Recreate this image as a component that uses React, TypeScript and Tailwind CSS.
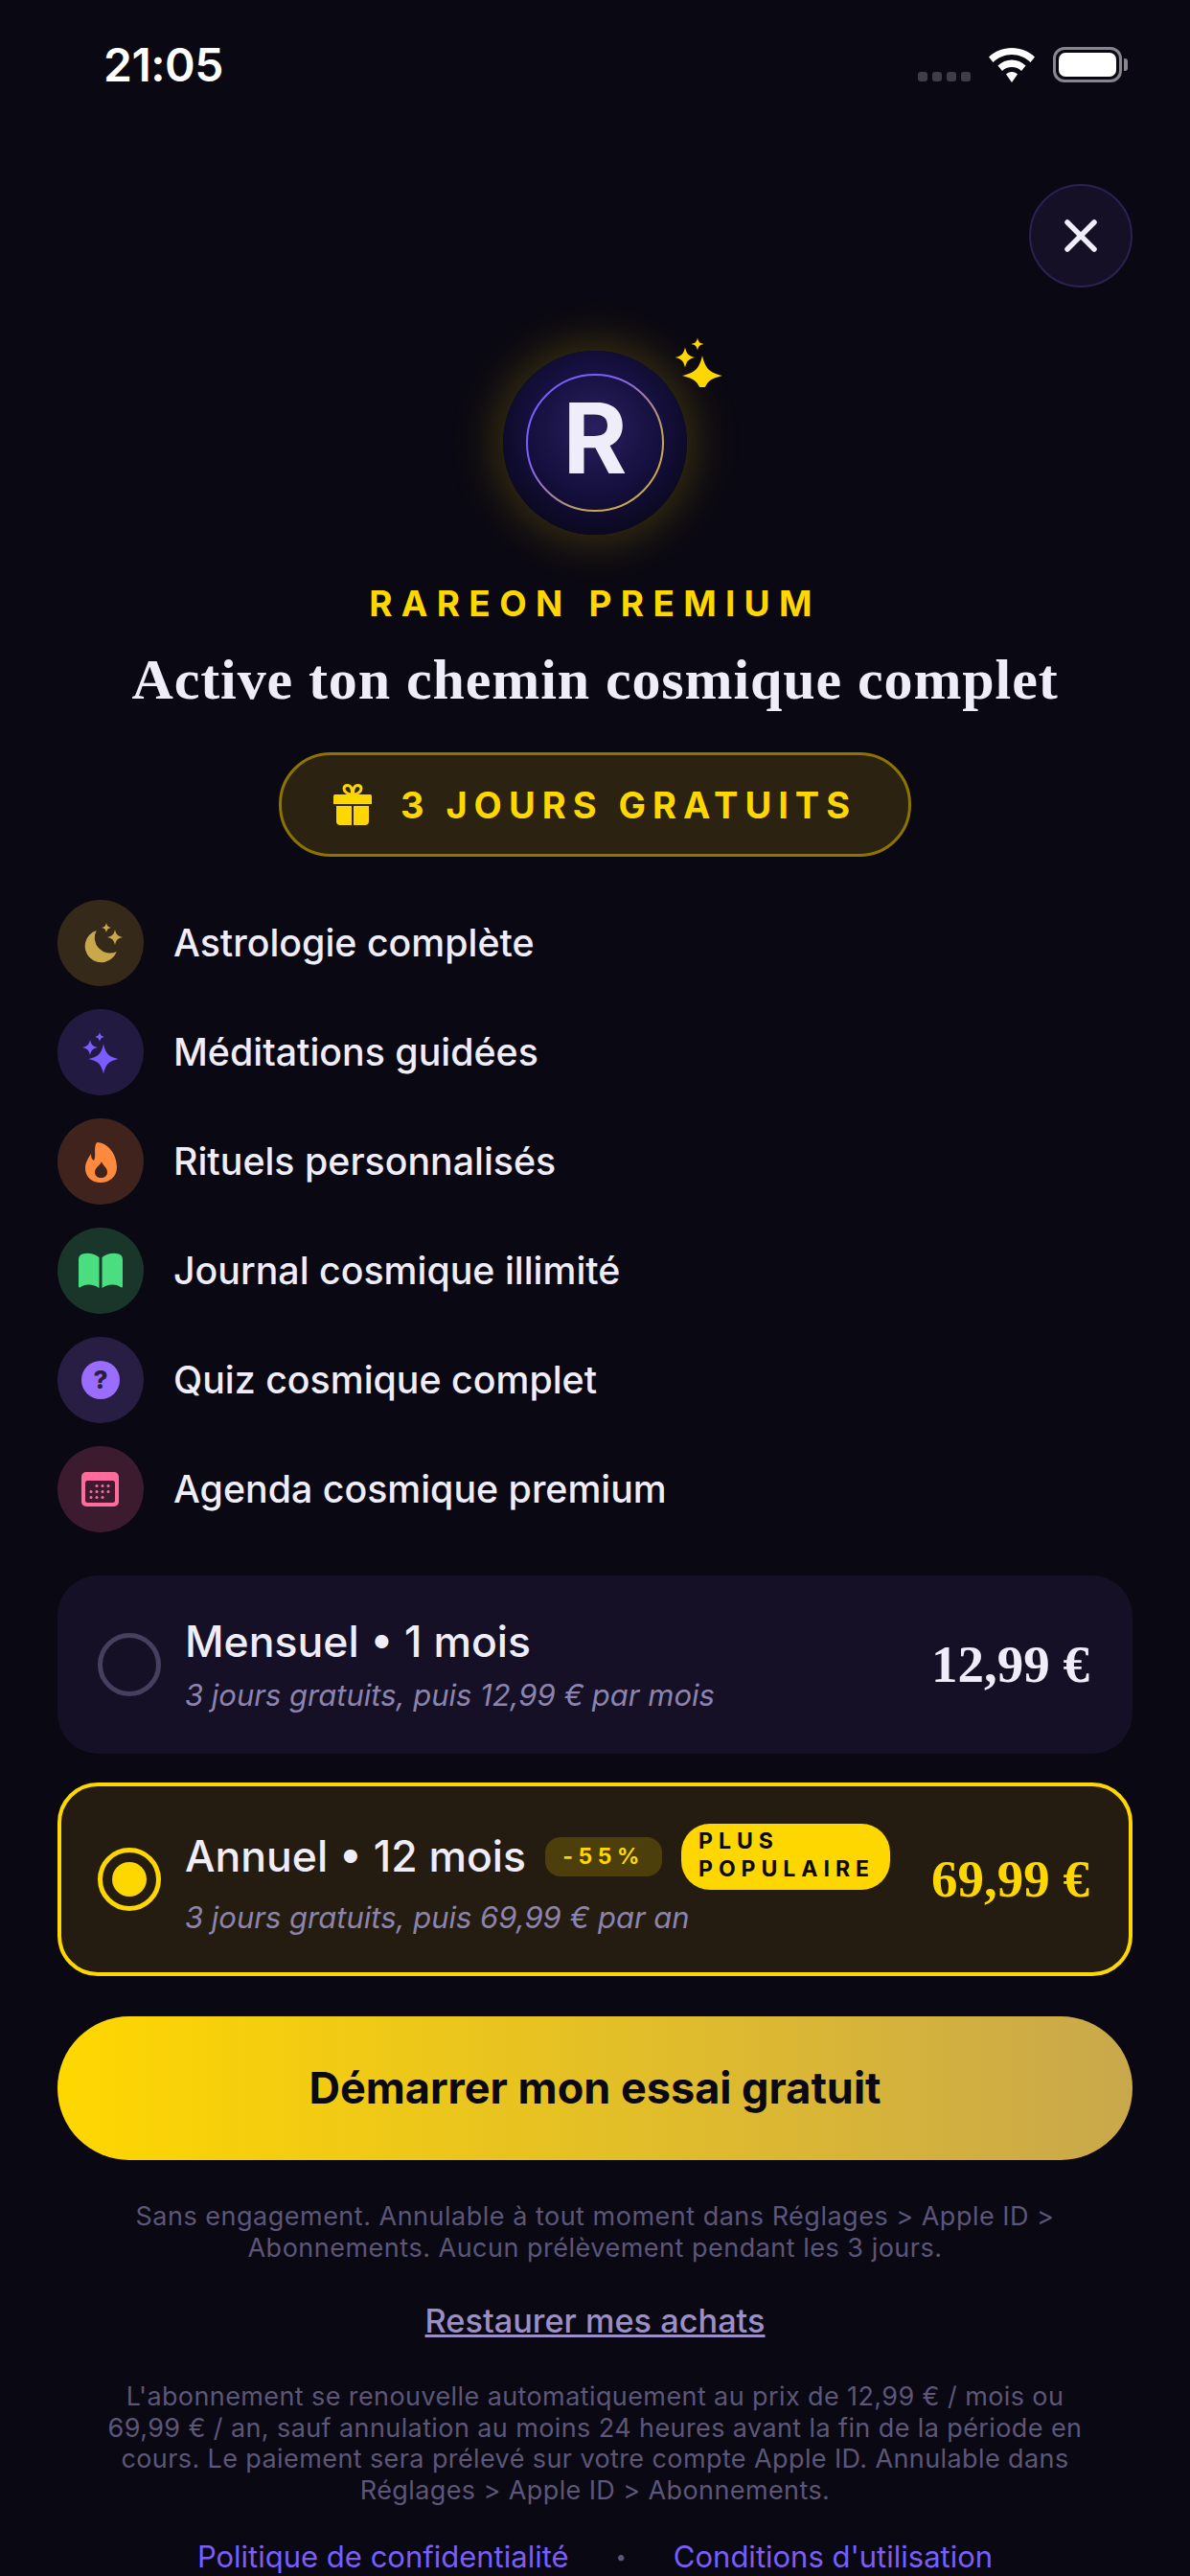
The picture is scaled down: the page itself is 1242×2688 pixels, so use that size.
const star = (cx: number, cy: number, r: number) => {
  const a = r * 0.15;
  const b = r * 0.35;
  return `M${cx} ${cy - r}C${cx + a} ${cy - b} ${cx + b} ${cy - a} ${cx + r} ${cy}C${cx + b} ${cy + a} ${cx + a} ${cy + b} ${cx} ${cy + r}C${cx - a} ${cy + b} ${cx - b} ${cy + a} ${cx - r} ${cy}C${cx - b} ${cy - a} ${cx - a} ${cy - b} ${cx} ${cy - r}Z`;
};

function MoonIcon() {
  return (
    <svg viewBox="0 0 90 90" className="w-[90px] h-[90px]" fill="#c9a84c">
      <path d="M40.700 32A17 17 0 1 0 61.700 54A16 16 0 0 1 40.700 32Z" />
      <path d={star(60, 39, 8)} />
      <path d={star(51, 29, 5)} />
    </svg>
  );
}

function SparkIcon() {
  return (
    <svg viewBox="0 0 90 90" className="w-[90px] h-[90px]" fill="#7b5cff">
      <path d={star(48, 52, 15.5)} />
      <path d={star(34, 40, 8)} />
      <path d={star(44, 29, 5)} />
    </svg>
  );
}

function FlameIcon() {
  return (
    <svg viewBox="0 0 90 90" className="w-[90px] h-[90px]">
      <path
        fill="#ff8a3d"
        d="M41 25C52 25 62 37 62 51C62 61 54 67 45 67C36 67 29 61 29 52C29 46 32 42 35 37C35 41 36 43 38 44C41 38 37 31 41 25Z"
      />
      <path fill="#3f231c" d="M46 45C47 49 52 51 52 56C52 60 49 62 45.500 62C42 62 39 60 39 56C39 51 44 50 46 45Z" />
    </svg>
  );
}

function BookIcon() {
  return (
    <svg viewBox="0 0 90 90" className="w-[90px] h-[90px]" fill="#4ade80">
      <path d="M22 33C22 30 24 28 26 27.500C32 26 38 27 43.500 31V63C38 59 30 58 24 62C23 63 22 62.500 22 61Z" />
      <path d="M68 33C68 30 66 28 64 27.500C58 26 52 27 46.500 31V63C52 59 60 58 66 62C67 63 68 62.500 68 61Z" />
    </svg>
  );
}

function QuizIcon() {
  return (
    <svg viewBox="0 0 90 90" className="w-[90px] h-[90px]">
      <circle cx="45" cy="45" r="20" fill="#9b6dff" />
      <text x="45" y="54" textAnchor="middle" fontSize="26" fontWeight="800" fontFamily="Inter, sans-serif" fill="#281d42">
        ?
      </text>
    </svg>
  );
}

function CalendarIcon() {
  const dots = [
    [41, 41.5],
    [47, 41.5],
    [53, 41.5],
    [35, 47.5],
    [41, 47.5],
    [47, 47.5],
    [53, 47.5],
    [35, 53.5],
    [41, 53.5],
    [47, 53.5],
  ];
  return (
    <svg viewBox="0 0 90 90" className="w-[90px] h-[90px]">
      <rect x="25" y="27" width="39" height="36" rx="5" fill="#ff6b9d" />
      <rect x="29" y="36" width="31" height="23" rx="2.500" fill="#3d1b2e" />
      {dots.map(([x, y]) => (
        <circle key={`${x}-${y}`} cx={x} cy={y} r="1.500" fill="#ff6b9d" />
      ))}
    </svg>
  );
}

const features = [
  { title: "Astrologie complète", bg: "bg-[#352919]", icon: MoonIcon },
  { title: "Méditations guidées", bg: "bg-[#221a40]", icon: SparkIcon },
  { title: "Rituels personnalisés", bg: "bg-[#3f231c]", icon: FlameIcon },
  { title: "Journal cosmique illimité", bg: "bg-[#1a3529]", icon: BookIcon },
  { title: "Quiz cosmique complet", bg: "bg-[#281d42]", icon: QuizIcon },
  { title: "Agenda cosmique premium", bg: "bg-[#3d1b2e]", icon: CalendarIcon },
];

function StatusBar() {
  return (
    <div className="h-[192px] pl-[108px] pr-[65px] pt-[42px] flex justify-between items-start">
      <span className="text-[48px] leading-[52px] font-semibold text-white tracking-[-0.5px]">21:05</span>
      <div className="flex items-end gap-[19px] pt-[7px]">
        <div className="flex gap-[5px] pb-[1px]">
          <span className="w-[10px] h-[10px] rounded-[3px] bg-[#3f3d47]" />
          <span className="w-[10px] h-[10px] rounded-[3px] bg-[#3f3d47]" />
          <span className="w-[10px] h-[10px] rounded-[3px] bg-[#3f3d47]" />
          <span className="w-[10px] h-[10px] rounded-[3px] bg-[#3f3d47]" />
        </div>
        <svg viewBox="0 0 48 36" className="w-[48px] h-[36px]" fill="white">
          <path d="M24 0C33.500 0 41.500 3.500 48 9.500L43.500 15C38.500 10 31.500 7 24 7C16.500 7 9.500 10 4.500 15L0 9.500C6.500 3.500 14.500 0 24 0Z" />
          <path d="M24 12.500C29.500 12.500 34.500 14.500 38.500 18.500L34 24C31.500 21.500 28 20 24 20C20 20 16.500 21.500 14 24L9.500 18.500C13.500 14.500 18.500 12.500 24 12.500Z" />
          <path d="M24 25C26.500 25 28.500 26 30 27.500L24 36L18 27.500C19.500 26 21.500 25 24 25Z" />
        </svg>
        <div className="flex items-center">
          <div className="w-[72px] h-[37px] rounded-[12px] border-[3px] border-[#88868c] p-[3px]">
            <div className="w-full h-full rounded-[7px] bg-white" />
          </div>
          <div className="w-[4px] h-[13px] ml-[2px] rounded-r-[3px] bg-[#88868c]" />
        </div>
      </div>
    </div>
  );
}

function Logo() {
  return (
    <div className="relative mt-[66px] mx-auto w-[192px] h-[192px] shrink-0">
      <div className="w-full h-full rounded-full flex items-center justify-center pb-[10px] bg-[radial-gradient(circle_at_50%_42%,#2a1f5c_0%,#15103f_45%,#05030c_95%)] shadow-[0_0_50px_6px_rgba(255,215,0,0.22)]">
        <span className="text-[102px] leading-none font-bold text-[#f0edfa]">R</span>
      </div>
      <svg viewBox="0 0 144 144" className="absolute left-[24px] top-[24px] w-[144px] h-[144px]" fill="none">
        <defs>
          <linearGradient id="ring" x1="0" y1="0" x2="1" y2="1">
            <stop offset="0.3" stopColor="#7b5cff" />
            <stop offset="0.75" stopColor="#c9a84c" />
          </linearGradient>
        </defs>
        <circle cx="72" cy="72" r="71" stroke="url(#ring)" strokeWidth="2" />
      </svg>
      <svg viewBox="0 0 60 60" className="absolute left-[175px] top-[-22px] w-[60px] h-[60px]" fill="#ffd700">
        <path d={star(33, 48, 21)} />
        <path d={star(15, 29, 10.5)} />
        <path d={star(28, 15, 6.5)} />
      </svg>
    </div>
  );
}

function Radio({ selected }: { selected?: boolean }) {
  return (
    <div
      className={
        selected
          ? "shrink-0 w-[66px] h-[66px] rounded-full border-[5px] border-[#ffd700] flex items-center justify-center"
          : "shrink-0 w-[66px] h-[66px] rounded-full border-[5px] border-[#45405e]"
      }
    >
      {selected && <div className="w-[36px] h-[36px] rounded-full bg-[#ffd700]" />}
    </div>
  );
}

export default function App() {
  return (
    <div
      className="w-[1242px] h-[2688px] overflow-hidden bg-[#0a0812] flex flex-col"
      style={{ fontFamily: "Inter, 'Noto Sans', sans-serif" }}
    >
      <StatusBar />

      <div className="flex justify-end pr-[60px]">
        <button className="w-[108px] h-[108px] rounded-full bg-[#151025] border-2 border-[#2a2250] flex items-center justify-center">
          <svg viewBox="0 0 34 34" className="w-[34px] h-[34px]" stroke="#f0edfa" strokeWidth="5.500" strokeLinecap="round">
            <path d="M3 3L31 31M31 3L3 31" />
          </svg>
        </button>
      </div>

      <Logo />

      <div className="mt-[49px] text-center text-[37px] leading-[46px] font-bold tracking-[9.300px] text-[#ffd700]">
        RAREON PREMIUM
      </div>
      <h1
        className="mt-[22px] text-center text-[60px] leading-[68px] font-bold tracking-[0.9px] text-[#f0edfa]"
        style={{ fontFamily: "'Liberation Serif', serif" }}
      >
        Active ton chemin cosmique complet
      </h1>

      <div className="mt-[42px] mx-auto w-[660px] h-[109px] shrink-0 rounded-[54px] bg-[#2c2212] border-[3px] border-[#8c7400] flex items-center justify-center gap-[30px]">
        <svg viewBox="0 0 40 43" className="w-[40px] h-[43px]" fill="#ffd700">
          <path d="M0 13C0 11.500 1 11 2 11H38C39 11 40 11.500 40 13V21H0Z" />
          <path d="M3 23H19V43H7C4.500 43 3 41.500 3 39Z" />
          <path d="M21 23H37V39C37 41.500 35.500 43 33 43H21Z" />
          <path
            fill="none"
            stroke="#ffd700"
            strokeWidth="3"
            d="M19.500 11C15 11 11 8 11 5C11 2.500 13 1.500 15 1.500C18 1.500 19.500 6 19.500 11ZM20.500 11C25 11 29 8 29 5C29 2.500 27 1.500 25 1.500C22 1.500 20.500 6 20.500 11Z"
          />
        </svg>
        <span className="text-[38px] leading-none font-bold tracking-[7px] text-[#ffd700]">3 JOURS GRATUITS</span>
      </div>

      <div className="mt-[45px] pl-[60px] flex flex-col gap-[24px]">
        {features.map((item) => (
          <div key={item.title} className="flex items-center gap-[31px]">
            <div className={`w-[90px] h-[90px] rounded-full ${item.bg}`}>
              <item.icon />
            </div>
            <span className="text-[39.300px] font-medium text-[#f0edfa]">{item.title}</span>
          </div>
        ))}
      </div>

      <div className="mt-[45px] mx-[60px] flex flex-col gap-[30px]">
        <div className="h-[186px] rounded-[42px] bg-[#151025] pl-[42px] pr-[45px] flex items-center gap-[25px]">
          <Radio />
          <div className="flex flex-col gap-[11px] pt-[1px]">
            <span className="text-[44.500px] leading-[52px] font-medium text-[#f0edfa]">Mensuel • 1 mois</span>
            <span className="text-[31px] leading-[38px] italic text-[#8c84ae]">3 jours gratuits, puis 12,99 € par mois</span>
          </div>
          <span
            className="ml-auto text-[55px] font-bold text-[#f0edfa]"
            style={{ fontFamily: "'Liberation Serif', serif" }}
          >
            12,99 €
          </span>
        </div>

        <div className="h-[202px] rounded-[42px] bg-[#241c10] border-[4px] border-[#ffd700] pl-[38px] pr-[41px] flex items-center gap-[25px]">
          <Radio selected />
          <div className="flex flex-col gap-[10px]">
            <div className="flex items-center">
              <span className="text-[44.500px] leading-[52px] font-medium text-[#f0edfa]">Annuel • 12 mois</span>
              <span className="ml-[20px] w-[122px] h-[41px] rounded-[16px] bg-[#4d3f0c] flex items-center justify-center text-[23px] font-bold tracking-[5.500px] text-[#ffd700]">
                -55%
              </span>
              <span className="ml-[20px] w-[218px] h-[69px] rounded-[30px] bg-[#ffd700] pl-[18px] pt-[4px] text-[23px] leading-[29px] font-bold tracking-[6px] text-[#0a0812]">
                PLUS
                <br />
                POPULAIRE
              </span>
            </div>
            <span className="text-[31px] leading-[38px] italic text-[#8c84ae]">3 jours gratuits, puis 69,99 € par an</span>
          </div>
          <span
            className="ml-auto text-[55px] font-bold text-[#ffd700]"
            style={{ fontFamily: "'Liberation Serif', serif" }}
          >
            69,99 €
          </span>
        </div>
      </div>

      <button className="mt-[42px] mx-[60px] h-[150px] shrink-0 rounded-[75px] bg-[linear-gradient(90deg,#ffd700,#c9a84c)] text-[45px] font-bold text-[#0a0812]">
        Démarrer mon essai gratuit
      </button>

      <p className="mt-[42px] text-center text-[27px] leading-[33px] text-[#5c5678] tracking-[0.5px]">
        Sans engagement. Annulable à tout moment dans Réglages &gt; Apple ID &gt;
        <br />
        Abonnements. Aucun prélèvement pendant les 3 jours.
      </p>

      <a className="mt-[40px] mx-auto text-[34.300px] leading-[40px] font-medium text-[#9b8ec9] underline">
        Restaurer mes achats
      </a>

      <p className="mt-[43px] text-center text-[27px] leading-[32.500px] text-[#5c5678] tracking-[0.4px]">
        L'abonnement se renouvelle automatiquement au prix de 12,99 € / mois ou
        <br />
        69,99 € / an, sauf annulation au moins 24 heures avant la fin de la période en
        <br />
        cours. Le paiement sera prélevé sur votre compte Apple ID. Annulable dans
        <br />
        Réglages &gt; Apple ID &gt; Abonnements.
      </p>

      <div className="mt-[34px] flex justify-center items-center gap-[49px] text-[31px] leading-[38px] text-[#7a5ef8]">
        <span>Politique de confidentialité</span>
        <span className="text-[20px] text-[#5c5678]">•</span>
        <span>Conditions d'utilisation</span>
      </div>
    </div>
  );
}
